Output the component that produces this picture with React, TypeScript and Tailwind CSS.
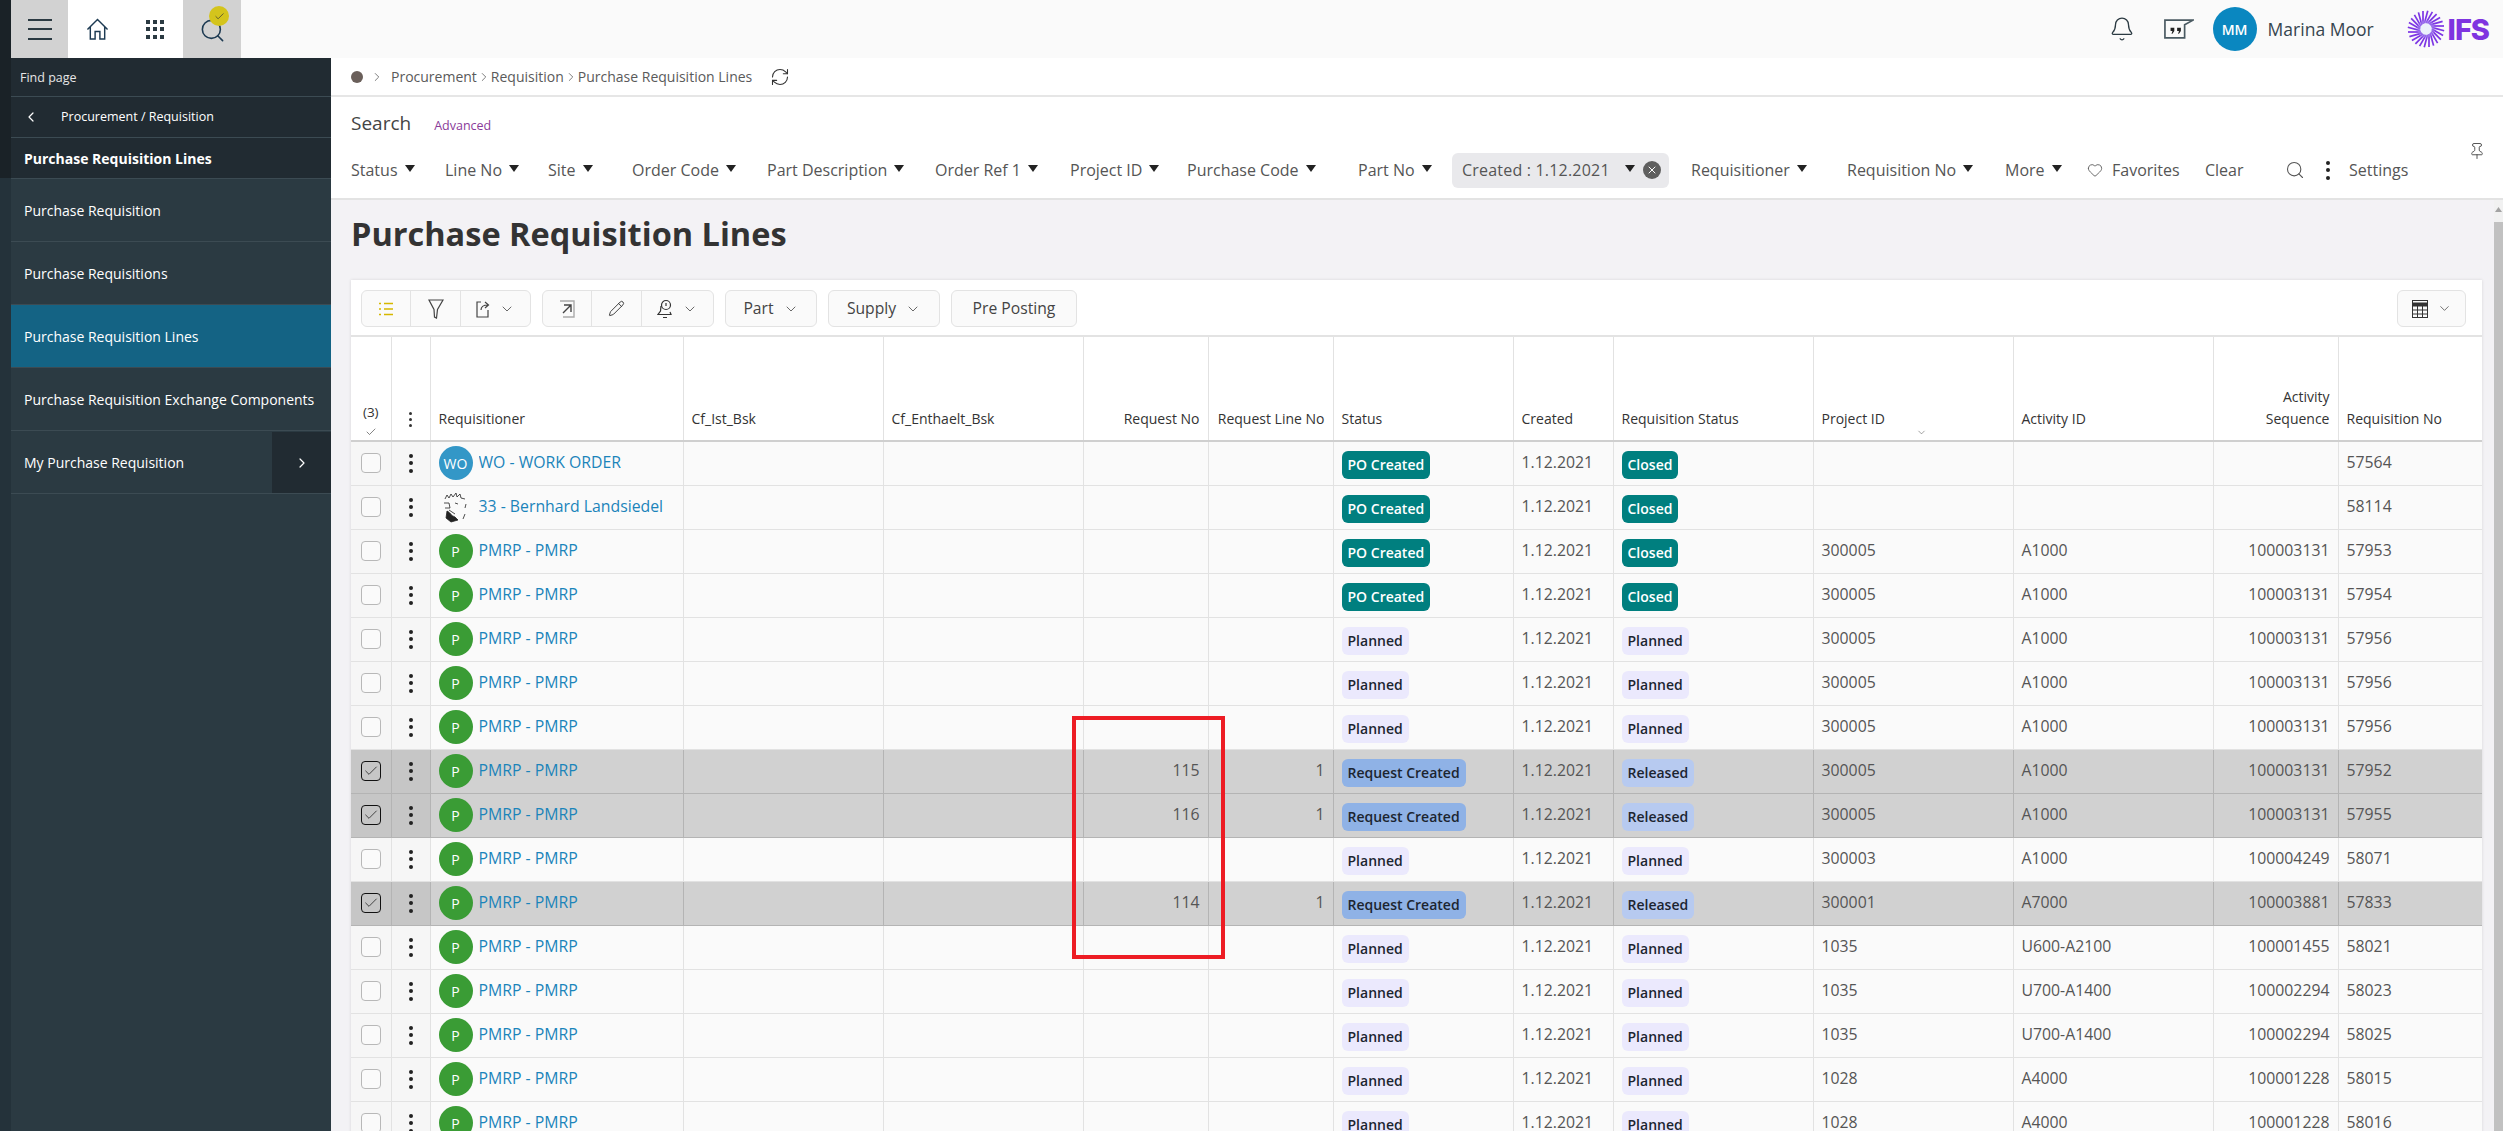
import { Bell, Check, ChevronDown, ChevronLeft, ChevronRight, Heart, Pencil, Pin, RefreshCw, Search, X } from "lucide-react";

type Row = {
  who: "wo" | "bernhard" | "pmrp";
  selected?: boolean;
  requestNo?: string;
  lineNo?: string;
  status: "po" | "planned" | "request";
  reqStatus: "closed" | "planned" | "released";
  project?: string;
  activity?: string;
  sequence?: string;
  reqNo: string;
};

const rows: Row[] = [
  { who: "wo", status: "po", reqStatus: "closed", reqNo: "57564" },
  { who: "bernhard", status: "po", reqStatus: "closed", reqNo: "58114" },
  { who: "pmrp", status: "po", reqStatus: "closed", project: "300005", activity: "A1000", sequence: "100003131", reqNo: "57953" },
  { who: "pmrp", status: "po", reqStatus: "closed", project: "300005", activity: "A1000", sequence: "100003131", reqNo: "57954" },
  { who: "pmrp", status: "planned", reqStatus: "planned", project: "300005", activity: "A1000", sequence: "100003131", reqNo: "57956" },
  { who: "pmrp", status: "planned", reqStatus: "planned", project: "300005", activity: "A1000", sequence: "100003131", reqNo: "57956" },
  { who: "pmrp", status: "planned", reqStatus: "planned", project: "300005", activity: "A1000", sequence: "100003131", reqNo: "57956" },
  { who: "pmrp", selected: true, requestNo: "115", lineNo: "1", status: "request", reqStatus: "released", project: "300005", activity: "A1000", sequence: "100003131", reqNo: "57952" },
  { who: "pmrp", selected: true, requestNo: "116", lineNo: "1", status: "request", reqStatus: "released", project: "300005", activity: "A1000", sequence: "100003131", reqNo: "57955" },
  { who: "pmrp", status: "planned", reqStatus: "planned", project: "300003", activity: "A1000", sequence: "100004249", reqNo: "58071" },
  { who: "pmrp", selected: true, requestNo: "114", lineNo: "1", status: "request", reqStatus: "released", project: "300001", activity: "A7000", sequence: "100003881", reqNo: "57833" },
  { who: "pmrp", status: "planned", reqStatus: "planned", project: "1035", activity: "U600-A2100", sequence: "100001455", reqNo: "58021" },
  { who: "pmrp", status: "planned", reqStatus: "planned", project: "1035", activity: "U700-A1400", sequence: "100002294", reqNo: "58023" },
  { who: "pmrp", status: "planned", reqStatus: "planned", project: "1035", activity: "U700-A1400", sequence: "100002294", reqNo: "58025" },
  { who: "pmrp", status: "planned", reqStatus: "planned", project: "1028", activity: "A4000", sequence: "100001228", reqNo: "58015" },
  { who: "pmrp", status: "planned", reqStatus: "planned", project: "1028", activity: "A4000", sequence: "100001228", reqNo: "58016" },
];

const filters = [
  { label: "Status", width: "w-[94px]" },
  { label: "Line No", width: "w-[103px]" },
  { label: "Site", width: "w-[84px]" },
  { label: "Order Code", width: "w-[135px]" },
  { label: "Part Description", width: "w-[168px]" },
  { label: "Order Ref 1", width: "w-[135px]" },
  { label: "Project ID", width: "w-[117px]" },
  { label: "Purchase Code", width: "w-[171px]" },
  { label: "Part No", width: "w-[94px]" },
];

const navItems = [
  "Purchase Requisition",
  "Purchase Requisitions",
  "Purchase Requisition Lines",
  "Purchase Requisition Exchange Components",
];

function Caret() {
  return (
    <svg width="10" height="7" viewBox="0 0 10 7" className="mb-[3px] ml-[7px] shrink-0">
      <path d="M0 0h10L5 7z" fill="#222" />
    </svg>
  );
}

function Kebab({ small }: { small?: boolean }) {
  const dot = small ? "h-[3px] w-[3px] rounded-full bg-[#333]" : "h-[4px] w-[4px] rounded-full bg-[#222]";
  return (
    <div className={small ? "flex flex-col items-center gap-[3px]" : "flex flex-col items-center gap-[3.5px]"}>
      <span className={dot} />
      <span className={dot} />
      <span className={dot} />
    </div>
  );
}

function IfsLogo() {
  const rays = Array.from({ length: 24 }, (_, i) => i * 15);
  return (
    <div className="flex items-center">
      <svg width="38" height="38" viewBox="-19 -19 38 38">
        <defs>
          <radialGradient id="ifs-ray" gradientUnits="userSpaceOnUse" cx="0" cy="0" r="18">
            <stop offset="0.3" stopColor="#cfe0fb" />
            <stop offset="0.7" stopColor="#7c35e4" />
          </radialGradient>
        </defs>
        {rays.map((angle) => (
          <line
            key={angle}
            x1="5"
            y1="-3"
            x2="18"
            y2="-3"
            stroke="#7c35e4"
            strokeWidth="1.7"
            transform={`rotate(${angle})`}
          />
        ))}
        <circle r="9" fill="url(#ifs-ray)" opacity="0.35" />
      </svg>
      <span className="ml-[3px] text-[29px] leading-none font-extrabold tracking-[-1px] text-[#7f35e0] font-['Inter',sans-serif]">
        IFS
      </span>
    </div>
  );
}

function TopBar() {
  return (
    <header className="flex h-[58px] shrink-0 items-center bg-[#fafafa]">
      <div className="flex h-full w-[57px] flex-col items-center justify-center gap-[7.5px] bg-[#d2d2d2]">
        <span className="h-[2px] w-[24px] bg-[#2b3a42]" />
        <span className="h-[2px] w-[24px] bg-[#2b3a42]" />
        <span className="h-[2px] w-[24px] bg-[#2b3a42]" />
      </div>
      <div className="flex h-full w-[58px] items-center justify-center bg-white">
        <svg width="23" height="23" viewBox="0 0 24 24" fill="none" stroke="#1d3a52" strokeWidth="1.5">
          <path d="M1.5 12 12 1.500 22.500 12M4.500 9.500V22h5v-8h5v8h5V9.500" />
        </svg>
      </div>
      <div className="grid h-full w-[57px] grid-cols-[4px_4px_4px] content-center justify-center gap-x-[3px] gap-y-[3.5px] bg-white">
        {Array.from({ length: 9 }, (_, i) => (
          <span key={i} className="h-[4px] w-[4px] bg-[#2b3a42]" />
        ))}
      </div>
      <div className="relative flex h-full w-[58px] items-center justify-center bg-[#d2d2d2]">
        <Search className="mt-[3px] h-[27px] w-[27px] text-[#1d3a52]" strokeWidth={1.4} />
        <span className="absolute left-[26px] top-[6px] flex h-[20px] w-[20px] items-center justify-center rounded-full bg-[#d4c41c]">
          <Check className="h-[11px] w-[11px] text-[#333]" strokeWidth={1.5} />
        </span>
      </div>
      <div className="ml-auto flex items-center">
        <Bell className="h-[26px] w-[26px] text-[#2b3a42]" strokeWidth={1.2} />
        <svg width="30" height="21" viewBox="0 0 32 22" fill="none" className="ml-[29px]">
          <path d="M31 1H1v19h21V6z" stroke="#4a5a62" strokeWidth="1.8" />
          <path d="M7 9h4v3.500l-2 3h-1l1-3H7zM14 9h4v3.500l-2 3h-1l1-3h-2z" fill="#222" />
        </svg>
        <div className="ml-[19px] flex h-[44px] w-[44px] items-center justify-center rounded-full bg-[#0a87c0] text-[14px] font-semibold text-white">
          MM
        </div>
        <span className="ml-[11px] text-[17.500px] text-[#36454f]">Marina Moor</span>
        <div className="ml-[33px] mr-[14px]">
          <IfsLogo />
        </div>
      </div>
    </header>
  );
}

function Sidebar() {
  return (
    <aside className="flex w-[320px] shrink-0 flex-col bg-[#2b3a42] text-white">
      <div className="flex h-[39px] items-center border-b border-[#3c4b53] bg-[#212b32] px-[9px] pt-[2px] text-[12.500px] text-[#e6e6e6]">
        Find page
      </div>
      <div className="flex h-[41px] items-center border-b border-[#3c4b53] bg-[#212b32] text-[12.500px]">
        <ChevronLeft className="ml-[12px] h-[16px] w-[16px]" strokeWidth={1.8} />
        <span className="ml-[22px]">Procurement / Requisition</span>
      </div>
      <div className="flex h-[41px] items-center border-b border-[#3c4b53] bg-[#212b32] px-[13px] text-[14px] font-bold">
        Purchase Requisition Lines
      </div>
      {navItems.map((item) => (
        <div
          key={item}
          className={
            item === "Purchase Requisition Lines"
              ? "flex h-[63px] items-center border-b border-[#3c4b53] bg-[#146384] px-[13px] text-[14px]"
              : "flex h-[63px] items-center border-b border-[#3c4b53] px-[13px] text-[14px]"
          }
        >
          {item}
        </div>
      ))}
      <div className="flex h-[63px] items-center border-b border-[#3c4b53] pt-[1px]">
        <span className="flex-1 px-[13px] text-[14px]">My Purchase Requisition</span>
        <span className="flex h-full w-[59px] items-center justify-center bg-[#212b32]">
          <ChevronRight className="h-[16px] w-[16px]" strokeWidth={1.8} />
        </span>
      </div>
    </aside>
  );
}

function Breadcrumb() {
  return (
    <div className="flex h-[39px] shrink-0 items-center border-b-2 border-[#e6e6e6] bg-white pl-[20px] text-[14px] text-[#5a5a5a]">
      <span className="h-[12px] w-[12px] rounded-full bg-[#6a5f5a]" />
      <ChevronRight className="ml-[7px] h-[14px] w-[14px] text-[#555]" strokeWidth={1.3} />
      <span className="ml-[7px]">Procurement</span>
      <ChevronRight className="h-[14px] w-[14px] text-[#555]" strokeWidth={1.3} />
      <span>Requisition</span>
      <ChevronRight className="h-[14px] w-[14px] text-[#555]" strokeWidth={1.3} />
      <span>Purchase Requisition Lines</span>
      <RefreshCw className="ml-[18px] h-[20px] w-[20px] text-[#333]" strokeWidth={1.3} />
    </div>
  );
}

function SearchPanel() {
  return (
    <div className="relative h-[103px] shrink-0 border-b-2 border-[#e3e3e3] bg-white pl-[20px]">
      <div className="flex items-baseline pt-[12px]">
        <span className="text-[19px] text-[#444]">Search</span>
        <span className="ml-[23px] text-[12.500px] text-[#8a3a99]">Advanced</span>
      </div>
      <Pin className="absolute right-[17px] top-[45px] h-[18px] w-[18px] text-[#444]" strokeWidth={1.2} />
      <div className="mt-[15px] flex h-[35px] items-center text-[16px] text-[#555]">
        {filters.map((filter) => (
          <div key={filter.label} className={`flex items-center ${filter.width}`}>
            {filter.label}
            <Caret />
          </div>
        ))}
        <div className="flex h-[35px] w-[217px] items-center rounded-[6px] bg-[#e9e9ec] pl-[10px]">
          <span className="tracking-[0.2px]">Created : 1.12.2021</span>
          <span className="ml-[8px]">
            <Caret />
          </span>
          <span className="ml-[8px] flex h-[18px] w-[18px] items-center justify-center rounded-full bg-[#5f5f5f]">
            <X className="h-[12px] w-[12px] text-white" strokeWidth={2} />
          </span>
        </div>
        <div className="ml-[22px] flex w-[156px] items-center">
          Requisitioner
          <Caret />
        </div>
        <div className="flex w-[158px] items-center">
          Requisition No
          <Caret />
        </div>
        <div className="flex w-[82px] items-center">
          More
          <Caret />
        </div>
        <Heart className="h-[16px] w-[16px]" strokeWidth={1.3} />
        <span className="ml-[9px] w-[93px]">Favorites</span>
        <span className="w-[80px]">Clear</span>
        <Search className="h-[20px] w-[20px]" strokeWidth={1.3} />
        <span className="ml-[21px]">
          <Kebab />
        </span>
        <span className="ml-[19px]">Settings</span>
      </div>
    </div>
  );
}

function ToolButton({ children, width, divider }: { children: React.ReactNode; width: string; divider?: boolean }) {
  return (
    <div className={`flex h-full items-center justify-center ${width} ${divider ? "border-r border-[#e3e3e3]" : ""}`}>
      {children}
    </div>
  );
}

function Toolbar() {
  const chevron = "ml-[9px] h-[16px] w-[16px] text-[#444]";
  return (
    <div className="flex h-[57px] items-center border-b-2 border-[#e3e3e3] bg-white pb-[1px] pl-[10px] pr-[16px] pt-[3px] text-[15.700px] text-[#444]">
      <div className="flex h-[37px] w-[170px] items-center rounded-[6px] border border-[#e3e3e3] bg-[#fafafa]">
        <ToolButton width="w-[49px]" divider>
          <svg width="16" height="16" viewBox="0 0 16 16" stroke="#d6b800" strokeWidth="1.6">
            <path d="M1 2.500h2M6 2.500h9M1 8h2M6 8h9M1 13.500h2M6 13.500h9" />
          </svg>
        </ToolButton>
        <ToolButton width="w-[50px]" divider>
          <svg width="16" height="20" viewBox="0 0 16 20" fill="none" stroke="#444" strokeWidth="1.200">
            <path d="M1 1h14L9.500 10.500 8.500 19l-2-1-.5-7.500z" />
          </svg>
        </ToolButton>
        <div className="flex h-full flex-1 items-center justify-center">
          <svg width="14" height="18" viewBox="0 0 14 18" fill="none" stroke="#444" strokeWidth="1.200">
            <path d="M5 2H1v15h11v-7M5 10c0-3 2-5 7-5M9 2l3.500 3L9 8" />
          </svg>
          <ChevronDown className={chevron} strokeWidth={1.2} />
        </div>
      </div>
      <div className="ml-[11px] flex h-[37px] w-[172px] items-center rounded-[6px] border border-[#e3e3e3] bg-[#fafafa]">
        <ToolButton width="w-[49px]" divider>
          <svg width="16" height="18" viewBox="0 0 16 18" fill="none" strokeWidth="1.400">
            <path d="M1 1h14v16H4" stroke="#aaa" />
            <path d="M4 13 12 5M5 5h7v7" stroke="#444" />
          </svg>
        </ToolButton>
        <ToolButton width="w-[50px]" divider>
          <Pencil className="h-[17px] w-[17px] text-[#333]" strokeWidth={1.3} />
        </ToolButton>
        <div className="flex h-full flex-1 items-center justify-center">
          <svg width="16" height="20" viewBox="0 0 16 20" fill="none" stroke="#333" strokeWidth="1.200">
            <circle cx="9" cy="6" r="4.500" />
            <path d="M9 4v3M4 7 3.500 12 1 15.500h13L13 13M6 18.500h4" />
          </svg>
          <ChevronDown className={chevron} strokeWidth={1.2} />
        </div>
      </div>
      <div className="ml-[11px] flex h-[37px] w-[92px] items-center justify-center rounded-[6px] border border-[#e3e3e3] bg-[#fafafa]">
        Part
        <ChevronDown className={chevron} strokeWidth={1.2} />
      </div>
      <div className="ml-[11px] flex h-[37px] w-[112px] items-center justify-center rounded-[6px] border border-[#e3e3e3] bg-[#fafafa]">
        Supply
        <ChevronDown className={chevron} strokeWidth={1.2} />
      </div>
      <div className="ml-[11px] flex h-[37px] w-[126px] items-center justify-center rounded-[6px] border border-[#e3e3e3] bg-[#fafafa]">
        Pre Posting
      </div>
      <div className="ml-auto flex h-[37px] w-[69px] items-center justify-center rounded-[6px] border border-[#e3e3e3] bg-[#fafafa]">
        <svg width="16" height="18" viewBox="0 0 16 18" fill="none" stroke="#333" strokeWidth="1">
          <rect x="0.500" y="0.500" width="15" height="17" />
          <path d="M0 4.500h16" strokeWidth="4" />
          <path d="M0 10h16M0 14h16M5.500 4v14M10.500 4v14" />
        </svg>
        <ChevronDown className="ml-[9px] h-[15px] w-[15px] text-[#444]" strokeWidth={1.2} />
      </div>
    </div>
  );
}

function Avatar({ who }: { who: Row["who"] }) {
  if (who === "bernhard") {
    return (
      <svg width="34" height="34" viewBox="0 0 34 34" fill="none" className="shrink-0" stroke="#222" strokeWidth="0.8">
        <path d="M6 9l2-4 2 3 2-4 2 3 3-4 1 4 3-3 1 4 4 1M5 13h5l1 5H6M16 13l3 1M27 14l-1 4M26 24l-2 5" />
        <path d="M8 21c3 1 4 5 8 6l3 3-7 2-5-4z" fill="#222" />
        <path d="M10 20l6 4" />
      </svg>
    );
  }
  return (
    <span
      className={
        who === "wo"
          ? "flex h-[34px] w-[34px] shrink-0 items-center justify-center rounded-full bg-[#3397c7] text-[14px] font-medium text-white"
          : "flex h-[34px] w-[34px] shrink-0 items-center justify-center rounded-full bg-[#3a9c35] text-[14px] font-medium text-white"
      }
    >
      {who === "wo" ? "WO" : "P"}
    </span>
  );
}

function Badge({ kind }: { kind: Row["status"] | Row["reqStatus"] }) {
  const base = "mt-[3px] inline-flex h-[28px] items-center rounded-[6px] px-[6px] text-[14px] font-semibold";
  if (kind === "po") return <span className={`${base} bg-[#007f7f] text-white`}>PO Created</span>;
  if (kind === "closed") return <span className={`${base} bg-[#007f7f] text-white`}>Closed</span>;
  if (kind === "request") return <span className={`${base} bg-[#8fb2e6] text-[#1c2530]`}>Request Created</span>;
  if (kind === "released") return <span className={`${base} bg-[#b7caf0] text-[#1c2530]`}>Released</span>;
  return <span className={`${base} bg-[#ebe9fd] text-[#1c2530]`}>Planned</span>;
}

const whoLabel = { wo: "WO - WORK ORDER", bernhard: "33 - Bernhard Landsiedel", pmrp: "PMRP - PMRP" };

function TableRow({ row }: { row: Row }) {
  const line = row.selected ? "border-[#b4b4b4]" : "border-[#e2e2e2]";
  const cell = `border-r border-b ${line} px-[8px] align-middle`;
  const num = `${cell} text-right`;
  const lead = row.selected ? "bg-[#c6c6c6]" : "bg-[#f6f6f6]";
  return (
    <tr className={row.selected ? "h-[44px] bg-[#d1d1d1]" : "h-[44px] bg-[#fafafa]"}>
      <td className={`border-r border-b ${line} ${lead} text-center align-middle`}>
        <span
          className={
            row.selected
              ? "mx-auto flex h-[20px] w-[20px] items-center justify-center rounded-[4px] border border-[#111]"
              : "mx-auto block h-[20px] w-[20px] rounded-[4px] border border-[#b8b8b8] bg-[#fafafa]"
          }
        >
          {row.selected ? <Check className="h-[16px] w-[16px] text-[#222]" strokeWidth={1.2} /> : null}
        </span>
      </td>
      <td className={`border-r border-b ${line} ${lead} align-middle`}>
        <div className="flex justify-center">
          <Kebab />
        </div>
      </td>
      <td className={cell}>
        <div className="flex items-center gap-[6px] text-[#1b84ba]">
          <Avatar who={row.who} />
          <span className="truncate">{whoLabel[row.who]}</span>
        </div>
      </td>
      <td className={cell} />
      <td className={cell} />
      <td className={num}>{row.requestNo}</td>
      <td className={num}>{row.lineNo}</td>
      <td className={cell}>
        <Badge kind={row.status} />
      </td>
      <td className={cell}>1.12.2021</td>
      <td className={cell}>
        <Badge kind={row.reqStatus} />
      </td>
      <td className={cell}>{row.project}</td>
      <td className={cell}>{row.activity}</td>
      <td className={num}>{row.sequence}</td>
      <td className={`border-b ${line} px-[8px] align-middle`}>{row.reqNo}</td>
    </tr>
  );
}

function HeaderCell({ children, right, last }: { children?: React.ReactNode; right?: boolean; last?: boolean }) {
  return (
    <th
      className={`px-[8px] pb-[10px] align-bottom text-[14px] leading-[22px] font-normal ${
        last ? "" : "border-r border-[#e2e2e2]"
      } ${right ? "text-right" : "text-left"}`}
    >
      {children}
    </th>
  );
}

function DataTable() {
  return (
    <table className="w-[2131px] table-fixed border-collapse text-[15.800px] text-[#555]">
      <colgroup>
        <col className="w-[40px]" />
        <col className="w-[39px]" />
        <col className="w-[253px]" />
        <col className="w-[200px]" />
        <col className="w-[200px]" />
        <col className="w-[125px]" />
        <col className="w-[125px]" />
        <col className="w-[180px]" />
        <col className="w-[100px]" />
        <col className="w-[200px]" />
        <col className="w-[200px]" />
        <col className="w-[200px]" />
        <col className="w-[125px]" />
        <col className="w-[144px]" />
      </colgroup>
      <thead className="border-b-2 border-[#cfcfcf] text-[#333]">
        <tr className="h-[104px] bg-white">
          <th className="border-r border-[#e2e2e2] pb-[2px] align-bottom text-[13.500px] leading-[20px] font-normal">
            (3)
            <Check className="mx-auto mt-[4px] h-[12px] w-[12px]" strokeWidth={1.2} />
          </th>
          <th className="border-r border-[#e2e2e2] pb-[13px] align-bottom">
            <div className="flex justify-center">
              <Kebab small />
            </div>
          </th>
          <HeaderCell>Requisitioner</HeaderCell>
          <HeaderCell>Cf_Ist_Bsk</HeaderCell>
          <HeaderCell>Cf_Enthaelt_Bsk</HeaderCell>
          <HeaderCell right>Request No</HeaderCell>
          <HeaderCell right>Request Line No</HeaderCell>
          <HeaderCell>Status</HeaderCell>
          <HeaderCell>Created</HeaderCell>
          <HeaderCell>Requisition Status</HeaderCell>
          <th className="relative border-r border-[#e2e2e2] px-[8px] pb-[10px] text-left align-bottom text-[14px] leading-[22px] font-normal">
            Project ID
            <ChevronDown className="absolute bottom-[2px] right-[86px] h-[11px] w-[11px] text-[#555]" strokeWidth={1.2} />
          </th>
          <HeaderCell>Activity ID</HeaderCell>
          <HeaderCell right>
            Activity
            <br />
            Sequence
          </HeaderCell>
          <HeaderCell last>Requisition No</HeaderCell>
        </tr>
      </thead>
      <tbody>
        {rows.map((row, index) => (
          <TableRow key={index} row={row} />
        ))}
      </tbody>
    </table>
  );
}

export default function App() {
  return (
    <div className="relative flex h-screen overflow-hidden bg-[#f3f2f5] font-['Open_Sans',sans-serif]">
      <div className="flex w-[11px] shrink-0 flex-col">
        <div className="h-[178px] bg-[#1a2227]" />
        <div className="flex-1 bg-[#24323a]" />
      </div>
      <div className="flex min-w-0 flex-1 flex-col">
        <TopBar />
        <div className="flex min-h-0 flex-1">
          <Sidebar />
          <main className="flex min-w-0 flex-1 flex-col">
            <Breadcrumb />
            <SearchPanel />
            <div className="flex min-h-0 flex-1">
              <div className="min-w-0 flex-1 pl-[20px]">
                <h1 className="pt-[12px] text-[32.500px] leading-[44px] font-bold text-[#333]">
                  Purchase Requisition Lines
                </h1>
                <div className="mt-[24px] w-[2131px] bg-white shadow-[0_0_3px_rgba(0,0,0,0.12)]">
                  <Toolbar />
                  <DataTable />
                </div>
              </div>
              <div className="flex w-[9px] shrink-0 flex-col bg-[#f1f1f1]">
                <svg width="9" height="22" viewBox="0 0 9 22" className="shrink-0">
                  <path d="M4.500 7 8 12H1z" fill="#a3a3a3" />
                </svg>
                <div className="flex-1 bg-[#c1c1c1]" />
              </div>
            </div>
          </main>
        </div>
      </div>
      {/* annotation drawn over the screenshot */}
      <div className="absolute left-[1072px] top-[716px] h-[243px] w-[153px] border-4 border-[#ed1c24]" />
    </div>
  );
}
